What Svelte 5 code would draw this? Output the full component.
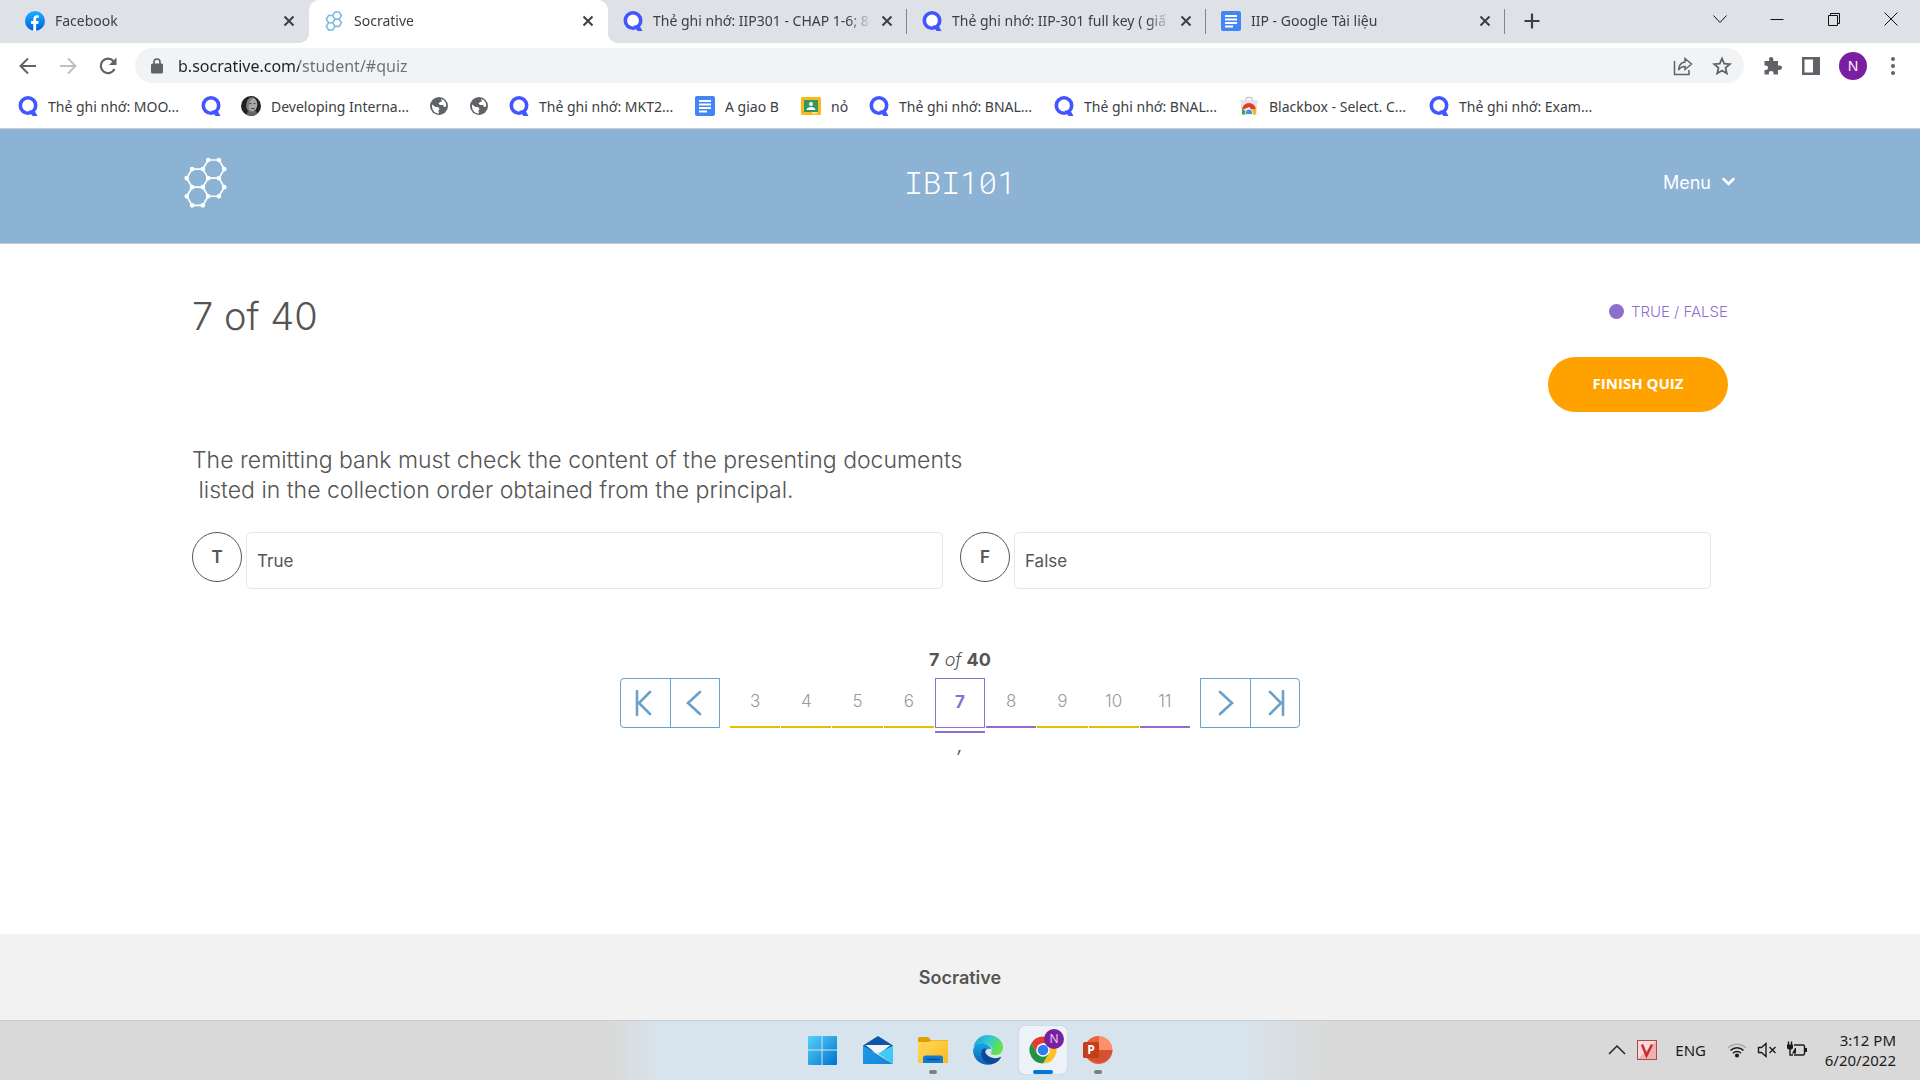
<script>
  const tabs = [
    { icon: 'facebook', title: 'Facebook' },
    { icon: 'socrative', title: 'Socrative', active: true },
    { icon: 'quizlet', title: 'Thẻ ghi nhớ: IIP301 - CHAP 1-6; 8', line: true },
    { icon: 'quizlet', title: 'Thẻ ghi nhớ: IIP-301 full key ( giấ', line: true },
    { icon: 'docs', title: 'IIP - Google Tài liệu', line: true }
  ];
  const bookmarks = [
    { icon: 'quizlet', title: 'Thẻ ghi nhớ: MOO...' },
    { icon: 'quizlet', title: '', name: 'Quizlet' },
    { icon: 'portrait', title: 'Developing Interna...' },
    { icon: 'globe', title: '', name: 'Website' },
    { icon: 'globe', title: '', name: 'Website' },
    { icon: 'quizlet', title: 'Thẻ ghi nhớ: MKT2...' },
    { icon: 'docs', title: 'A giao B' },
    { icon: 'classroom', title: 'nỏ' },
    { icon: 'quizlet', title: 'Thẻ ghi nhớ: BNAL...' },
    { icon: 'quizlet', title: 'Thẻ ghi nhớ: BNAL...' },
    { icon: 'store', title: 'Blackbox - Select. C...' },
    { icon: 'quizlet', title: 'Thẻ ghi nhớ: Exam...' }
  ];
  const answers = [
    { letter: 'T', text: 'True' },
    { letter: 'F', text: 'False' }
  ];
  const pages = [
    { n: 3, kind: 'choice' },
    { n: 4, kind: 'choice' },
    { n: 5, kind: 'choice' },
    { n: 6, kind: 'choice' },
    { n: 7, kind: 'truefalse' },
    { n: 8, kind: 'truefalse' },
    { n: 9, kind: 'choice' },
    { n: 10, kind: 'choice' },
    { n: 11, kind: 'truefalse' }
  ];
  let url = $state('b.socrative.com/student/#quiz');
  let current = $state(7);
</script>

{#snippet hexes()}
  <path d="M145 91H177L193 118L177 145H145L129 118ZM129 118H97L81 145L97 172H129L145 145M177 145L193 172L177 199H145L129 172M97 172L81 199L97 226H129L145 199" />
{/snippet}

{#snippet siteIcon(name)}
  {#if name === 'facebook'}
    <svg class="site" viewBox="0 0 20 20" aria-hidden="true">
      <defs><linearGradient id="fb" x1="0" y1="0" x2="0" y2="1"><stop offset="0" stop-color="#19afff" /><stop offset="1" stop-color="#0062e0" /></linearGradient></defs>
      <circle cx="10" cy="10" r="10" fill="url(#fb)" />
      <path d="M8.3 19.9V13H6V10h2.300V8c0-2.500 1.400-3.800 3.600-3.800.7 0 1.300.1 1.900.2v2.400h-1.200c-1.200 0-1.500.7-1.500 1.500V10h2.600l-.5 3h-2.100v6.900a10 10 0 0 1-2.800 0z" fill="#fff" />
    </svg>
  {:else if name === 'socrative'}
    <svg class="site" viewBox="75 84 126 150" fill="none" stroke="#7cbbe0" stroke-width="12" aria-hidden="true">{@render hexes()}</svg>
  {:else if name === 'quizlet'}
    <svg class="site" viewBox="0 0 20 20" aria-hidden="true">
      <circle cx="10" cy="9.500" r="7.700" fill="#fff" stroke="#4255ff" stroke-width="3.600" />
      <path d="M10.500 14.500h4l3 2L19.500 20h-5z" fill="#4255ff" />
    </svg>
  {:else if name === 'docs'}
    <svg class="site" viewBox="0 0 20 20" aria-hidden="true">
      <rect width="20" height="20" rx="2" fill="#4285f4" />
      <path d="M4 5h12M4 8.500h12M4 12h12M4 15.500h8" stroke="#fff" stroke-width="1.800" />
    </svg>
  {:else if name === 'portrait'}
    <svg class="site" viewBox="0 0 20 20" aria-hidden="true">
      <defs><clipPath id="round"><circle cx="10" cy="10" r="10" /></clipPath></defs>
      <g clip-path="url(#round)">
        <rect width="20" height="20" fill="#222" />
        <path d="M5 20l2-5h8l2 5z" fill="#666" />
        <ellipse cx="11" cy="8.500" rx="5.300" ry="7" fill="#a8a8a8" />
        <path d="M6 6C7 1.500 12 1 13 2L9 5l-1.500 7 2 4-3-2c-2-2-1.500-5-.5-8z" fill="#7c7c7c" />
        <path d="M8.500 7.500h2M12.500 7.500h2M10 12.500h3.500" stroke="#444" />
      </g>
    </svg>
  {:else if name === 'globe'}
    <svg class="site" viewBox="0 0 20 20" aria-hidden="true">
      <circle cx="10" cy="10" r="9" fill="#5f6368" />
      <path d="M3 8.500l3.500 2.500 2.500 0 1.500 2-1 2 .5 2.500C6 18 2.500 14 3 8.500zM12 3c4 1 5.500 4 5.200 7.500L15 11l-1-2h-3L9.500 7.500 11 6l2-.5z" fill="#fff" />
    </svg>
  {:else if name === 'classroom'}
    <svg class="site" viewBox="0 0 20 20" aria-hidden="true">
      <rect y="1" width="20" height="18" rx="1.500" fill="#f7bb18" />
      <rect x="3" y="4" width="14" height="12" fill="#359660" />
      <circle cx="10" cy="8" r="2" fill="#fff" />
      <path d="M5.500 14c0-4 9-4 9 0z" fill="#fff" />
      <path d="M11 17h5" stroke="#fff" />
    </svg>
  {:else}
    <svg class="site" viewBox="0 0 20 20" aria-hidden="true">
      <path d="M7 5V2.500q0-1 1-1h4q1 0 1 1V5" fill="none" stroke="#ccc" stroke-width="1.500" />
      <path d="M1.500 4h17l-1 14.500h-15z" fill="#e4e4e4" />
      <path d="M3 14a7 7 0 0 1 14 0l-4 0-3-3z" fill="#e33b2e" />
      <path d="M3 13v5.500h4.500l1.500-2z" fill="#35a853" />
      <path d="M17 13v5.500h-5l-1-3 2-2.500z" fill="#fbbc05" />
      <path d="M6.500 18.500v-2a3.500 3.500 0 0 1 7 0v2z" fill="#4a90e8" stroke="#fff" stroke-width=".8" />
    </svg>
  {/if}
{/snippet}

<div class="screen">
  <div class="tabstrip">
    <div class="tabs" role="tablist">
      {#each tabs as tab}
        <div class="tab" class:active={tab.active} class:line={tab.line}>
          <button class="tab-main" role="tab" aria-selected={!!tab.active}>
            {@render siteIcon(tab.icon)}
            <span class="tab-title">{tab.title}</span>
          </button>
          <button class="tab-close" aria-label="Close tab">
            <svg viewBox="0 0 12 12" width="12" height="12"><path d="M1.500 1.500l9 9M10.500 1.500l-9 9" stroke="#3c4043" stroke-width="2" /></svg>
          </button>
        </div>
      {/each}
      <button class="new-tab" aria-label="New tab">
        <svg viewBox="0 0 16 16" width="16" height="16"><path d="M8 .5v15M.5 8h15" stroke="#3c4043" stroke-width="2.200" /></svg>
      </button>
    </div>
    <div class="window-buttons">
      <button aria-label="Search tabs"><svg viewBox="0 0 14 14"><path d="M.5 3.500l6.500 7 6.500-7" /></svg></button>
      <button aria-label="Minimize"><svg viewBox="0 0 14 14"><path d="M.5 7.500h13" /></svg></button>
      <button aria-label="Restore"><svg viewBox="0 0 14 14"><path d="M1.500 3.500h9v10h-9zM3.500 3V1.500h9v10H11" /></svg></button>
      <button aria-label="Close"><svg viewBox="0 0 14 14"><path d="M.5 .5l13 13M13.500 .5l-13 13" /></svg></button>
    </div>
  </div>

  <div class="toolbar">
    <div class="nav-buttons">
      <button aria-label="Back"><svg viewBox="0 0 20 20"><path d="M18 10H3M10 2.500L2.500 10l7.500 7.500" fill="none" stroke="#5f6368" stroke-width="2" /></svg></button>
      <button aria-label="Forward"><svg viewBox="0 0 20 20"><path d="M2 10h15M10 2.500l7.500 7.500-7.500 7.500" fill="none" stroke="#bdc0c3" stroke-width="2" /></svg></button>
      <button aria-label="Reload"><svg viewBox="0 0 20 20"><path d="M16.500 13A7.200 7.200 0 1 1 15.500 5.200" fill="none" stroke="#5f6368" stroke-width="2.200" /><path d="M18.500 1.500V9H11z" fill="#5f6368" /></svg></button>
    </div>
    <div class="omnibox">
      <svg class="lock" viewBox="0 0 12 16" aria-hidden="true"><rect y="5.500" width="12" height="10" rx="1.500" fill="#5f6368" /><path d="M3 6V4a3 3 0 0 1 6 0v2" fill="none" stroke="#5f6368" stroke-width="1.600" /></svg>
      <input aria-label="Address" bind:value={url} />
      <button aria-label="Share"><svg viewBox="0 0 20 20" fill="none" stroke="#5f6368" stroke-width="1.500"><path d="M1.500 5v13.500H16V14" /><path d="M12 2.500l6.500 5.500-6.500 5.500V10.500c-3 0-5 1-6.500 3.500.3-4.500 2.500-7.500 6.500-8z" /></svg></button>
      <button aria-label="Bookmark this tab"><svg viewBox="0 0 20 20" fill="none" stroke="#5f6368" stroke-width="1.800"><path d="M10 2.500l2.200 5.200 5.600.5-4.300 3.700 1.300 5.500L10 14.500l-4.800 2.900 1.300-5.500-4.300-3.700 5.600-.5z" /></svg></button>
    </div>
    <div class="tool-buttons">
      <button aria-label="Extensions"><svg viewBox="0 0 20 20"><path d="M1.500 5h4.800C5.500 2.500 6.500 1 8.200 1s2.700 1.500 2 4h4.800v4.800c2.400-.6 4 .3 4 2s-1.600 2.700-4 2V18.500h-4.500c.4-2.400-.6-3.500-2.300-3.500s-2.700 1.100-2.200 3.500H1.500V14c2.400.4 3.500-.6 3.500-2.200s-1.100-2.600-3.500-2.200z" fill="#5f6368" /></svg></button>
      <button aria-label="Side panel"><svg viewBox="0 0 20 20"><path d="M1 1h18v18H1zM3.500 3.500v13H12v-13z" fill="#5f6368" fill-rule="evenodd" /></svg></button>
      <button class="avatar" aria-label="Profile N">N</button>
      <button aria-label="Browser menu"><svg viewBox="0 0 20 20" fill="#5f6368"><circle cx="10" cy="3" r="2" /><circle cx="10" cy="10" r="2" /><circle cx="10" cy="17" r="2" /></svg></button>
    </div>
  </div>

  <nav class="bookmarks" aria-label="Bookmarks">
    {#each bookmarks as mark}
      <a href="#bookmark" aria-label={mark.name}>
        {@render siteIcon(mark.icon)}
        {#if mark.title}<span>{mark.title}</span>{/if}
      </a>
    {/each}
  </nav>

  <header class="site-header">
    <a class="logo" href="#home" aria-label="Socrative home">
      <svg viewBox="73 82 128 152" fill="none" stroke="#fff" stroke-width="5">
        {@render hexes()}
        <path class="nodes" d="M145 91h0M177 91h0M193 118h0M177 145h0M145 145h0M129 118h0M97 118h0M81 145h0M97 172h0M129 172h0M193 172h0M177 199h0M145 199h0M81 199h0M97 226h0M129 226h0" />
      </svg>
    </a>
    <div class="room">IBI101</div>
    <button class="menu">Menu <svg viewBox="0 0 14 10" aria-hidden="true"><path d="M2 2l5 5 5-5" fill="none" stroke="#fff" stroke-width="2.500" stroke-linecap="round" /></svg></button>
  </header>

  <main>
    <div class="quiz-top">
      <h1>7 of 40</h1>
      <div class="quiz-side">
        <div class="kind"><i></i>TRUE / FALSE</div>
        <button class="finish">FINISH QUIZ</button>
      </div>
    </div>
    <p class="question">The remitting bank must check the content of the presenting documents<br />&nbsp;listed in the collection order obtained from the principal.</p>
    <div class="answers">
      {#each answers as answer}
        <button class="answer">
          <span class="letter">{answer.letter}</span>
          <span class="answer-text">{answer.text}</span>
        </button>
      {/each}
    </div>
    <div class="count"><b>{current}</b> <em>of</em> <b>40</b></div>
    <nav class="pager" aria-label="Questions">
      <div class="step-group before">
        <button aria-label="First question"><svg viewBox="0 0 26 26"><path d="M5 1v24M18 2L7 13l11 11" /></svg></button>
        <button aria-label="Previous question"><svg viewBox="0 0 26 26"><path d="M18 2L6 13l12 11" /></svg></button>
      </div>
      <div class="pages">
        {#each pages as page}
          <button class="page {page.kind}" class:current={page.n === current} onclick={() => (current = page.n)}>{page.n}</button>
        {/each}
      </div>
      <div class="step-group after">
        <button aria-label="Next question"><svg viewBox="0 0 26 26"><path d="M8 2l12 11L8 24" /></svg></button>
        <button aria-label="Last question"><svg viewBox="0 0 26 26"><path d="M21 1v24M8 2l11 11L8 24" /></svg></button>
      </div>
    </nav>
    <div class="comma"><em>,</em></div>
  </main>

  <footer>Socrative</footer>

  <div class="taskbar">
    <div></div>
    <div class="apps">
      <button aria-label="Start">
        <svg viewBox="0 0 30 30">
          <defs><linearGradient id="win" x1="0" y1="0" x2="1" y2="1"><stop offset="0" stop-color="#56d1fb" /><stop offset="1" stop-color="#0073d0" /></linearGradient></defs>
          <path d="M0 2a1 1 0 0 1 1-1H13.500V14.500H0zM14.500 1H28a1 1 0 0 1 1 1V14.500H14.500zM0 15.500H13.500V30H1a1 1 0 0 1-1-1zM14.500 15.500H29V29a1 1 0 0 1-1 1H14.500z" fill="url(#win)" />
        </svg>
      </button>
      <button aria-label="Mail">
        <svg viewBox="0 0 30 30">
          <defs><linearGradient id="mail" x1="0" y1="0" x2="1" y2="1"><stop offset="0" stop-color="#1c9de6" /><stop offset="1" stop-color="#1586d8" /></linearGradient></defs>
          <path d="M0 10.500L15 1l15 9.500-3 6H3z" fill="#0a59a8" />
          <path d="M2.500 10h25L15 20z" fill="#f5f5f5" />
          <path d="M30 10.500V29L15 18.500z" fill="#3fc9f5" />
          <path d="M0 10.500V29h30z" fill="url(#mail)" />
        </svg>
      </button>
      <button class="running" aria-label="File Explorer">
        <svg viewBox="0 0 30 30">
          <defs><linearGradient id="folder" x1="0" y1="0" x2="1" y2="1"><stop offset="0" stop-color="#ffd95e" /><stop offset="1" stop-color="#fbb91f" /></linearGradient></defs>
          <path d="M0 3.500Q0 2 1.500 2H10l3 3h15.500Q30 5 30 7v4H0z" fill="#e0a000" />
          <path d="M0 7h11l2.500-1.500H30V28H0z" fill="url(#folder)" />
          <path d="M5 28v-5q0-2.500 2.500-2.500h15Q25 20.500 25 23v5z" fill="#0f7cd4" />
          <path d="M8.500 24.500h13" stroke="#064d8c" stroke-width="1.500" />
        </svg>
      </button>
      <button aria-label="Edge">
        <svg viewBox="0 0 30 30">
          <defs>
            <linearGradient id="edgeTop" x1="0" y1="0" x2="1" y2=".4"><stop offset="0" stop-color="#1b96de" /><stop offset=".5" stop-color="#32c6d6" /><stop offset="1" stop-color="#62e346" /></linearGradient>
            <linearGradient id="edgeLow" x1="0" y1="0" x2="0" y2="1"><stop offset="0" stop-color="#1aa4e6" /><stop offset="1" stop-color="#0a5cb8" /></linearGradient>
          </defs>
          <path d="M.5 12C2 4.500 8 0 15 0c9 0 15 6 15 12.500 0 5-3.500 7.500-7.500 7.500-4 0-5.500-1.500-4-3.500C20 14 18 9 11.500 9 6 9 2 11 .5 12z" fill="url(#edgeTop)" />
          <path d="M0 15C1 10 5.500 8 10 8.500c5.500.5 8.500 3.500 8.500 7 0-2.500-6-2.500-6.500 2.500-.4 5 4 11.500 9 10.500C12 32.500 0 27 0 15z" fill="url(#edgeLow)" />
          <path d="M9 15c-2.500 8 3 14.500 10 14 4-.7 7.300-3.300 9-6.500.3-.6-.2-.9-.7-.6C22 24.500 15.500 23 12.500 18c-.8-2-.2-3.500 1-4.500-2 0-3.700 0-4.500 1.500z" fill="#0d4a94" />
        </svg>
      </button>
      <button class="focused" aria-label="Chrome">
        <svg viewBox="0 0 30 30">
          <path d="M3.300 8.250A13.500 13.500 0 0 1 26.700 8.250H15L9.150 18.400z" fill="#e33b2e" />
          <path d="M26.700 8.250A13.500 13.500 0 0 1 15 28.500L20.850 18.400 15 8.250z" fill="#fcc31e" />
          <path d="M3.300 8.250L9.150 18.400H20.850L15 28.500A13.500 13.500 0 0 1 3.300 8.250z" fill="#229342" />
          <circle cx="15" cy="15" r="6.750" fill="#fff" />
          <circle cx="15" cy="15" r="5.300" fill="#2f7cf0" />
        </svg>
        <span class="badge">N</span>
      </button>
      <button class="running" aria-label="PowerPoint">
        <svg viewBox="0 0 30 30">
          <path d="M16 1A14 14 0 1 0 29.500 15H16z" fill="#e8623f" />
          <path d="M16 1A14 14 0 0 1 29.500 15H16z" fill="#ff8f6b" />
          <path d="M29.500 15A14 14 0 0 1 3 20L16 15z" fill="#d35230" />
          <rect x="0" y="7" width="16" height="16" rx="1.500" fill="#c43e1c" />
          <text x="8" y="19" text-anchor="middle" font-family="Open Sans, sans-serif" font-size="12" font-weight="700" fill="#fff">P</text>
        </svg>
      </button>
    </div>
    <div class="tray">
      <button aria-label="Hidden icons"><svg viewBox="0 0 20 20" fill="none" stroke="#222" stroke-width="1.500"><path d="M2 14l8-8 8 8" /></svg></button>
      <button class="unikey" aria-label="Vietnamese keyboard">
        <svg viewBox="0 0 20 20"><rect x=".5" y=".5" width="19" height="19" fill="#f4dada" stroke="#b8474b" /><path d="M1 19L19 1v18z" fill="#e9b3b3" /><path d="M5 4.500L9.500 15.500 15 4.500" fill="none" stroke="#cf2a30" stroke-width="2.500" /></svg>
      </button>
      <button class="lang">ENG</button>
      <button class="status" aria-label="Network, volume, battery">
        <svg viewBox="0 0 20 20" fill="none" stroke="#1b1b1b" stroke-width="1.500"><path d="M1 8a12.500 12.500 0 0 1 18 0" stroke="#aaa" /><path d="M3.500 10.500a9 9 0 0 1 13 0M6 13.200a5.600 5.600 0 0 1 8 0" /><circle cx="10" cy="15.500" r="1.300" fill="#1b1b1b" /></svg>
        <svg viewBox="0 0 20 20" fill="none" stroke="#1b1b1b" stroke-width="1.400"><path d="M1.500 7.500h3L9 3.500v13l-4.500-4h-3zM12.500 7l6 6M18.500 7l-6 6" /></svg>
        <svg viewBox="0 0 20 20" fill="none" stroke="#1b1b1b" stroke-width="1.400"><path d="M7 5h9q1.500 0 1.500 1.500v7Q17.500 15 16 15H7" /><path d="M19 8v4" stroke-width="2" /><path d="M0 4.500h6v3q0 2-3 2t-3-2zM8 8h1v5.500H5z" fill="#1b1b1b" stroke="none" /><path d="M1.500 5V1.500M4.500 5V1.500M3 9v6h3" /></svg>
      </button>
      <button class="clock"><span>3:12 PM</span><span>6/20/2022</span></button>
    </div>
  </div>
</div>

<style>
  :global(body) {
    margin: 0;
    background: #fff;
  }
  .screen {
    min-height: 100vh;
    display: flex;
    flex-direction: column;
    font-family: Inter, 'Liberation Sans', sans-serif;
    color: #555;
  }
  .screen :global(*) {
    box-sizing: border-box;
  }
  button {
    border: 0;
    padding: 0;
    margin: 0;
    background: none;
    font: inherit;
    color: inherit;
    cursor: pointer;
  }
  a {
    color: inherit;
    text-decoration: none;
  }
  svg {
    display: block;
    flex: none;
  }
  .site {
    width: 20px;
    height: 20px;
  }

  .tabstrip,
  .toolbar,
  .bookmarks,
  .taskbar {
    font-family: 'Noto Sans', 'Open Sans', sans-serif;
  }
  .tabstrip {
    display: flex;
    justify-content: space-between;
    height: 43px;
    background: #dee1e6;
  }
  .tabs {
    display: flex;
    flex: 1;
    padding-left: 10px;
  }
  .tab {
    position: relative;
    display: flex;
    align-items: center;
    flex: 0 1 299px;
    min-width: 0;
    padding: 0 14px 2px 15px;
    font-size: 14px;
    color: #3c4043;
  }
  .tab.active {
    background: #fff;
    border-radius: 10px 10px 0 0;
  }
  .tab.active::before,
  .tab.active::after {
    content: '';
    position: absolute;
    bottom: 0;
    width: 10px;
    height: 10px;
  }
  .tab.active::before {
    left: -10px;
    background: radial-gradient(circle at 0 0, transparent 10px, #fff 10px);
  }
  .tab.active::after {
    right: -10px;
    background: radial-gradient(circle at 100% 0, transparent 10px, #fff 10px);
  }
  .tab.line::after {
    content: '';
    position: absolute;
    right: 0;
    top: 9px;
    width: 1px;
    height: 25px;
    background: #80868b;
  }
  .tab-main {
    display: flex;
    align-items: center;
    gap: 10px;
    flex: 1;
    min-width: 0;
    height: 100%;
    text-align: left;
  }
  .tab-title {
    flex: 1;
    white-space: nowrap;
    mask-image: linear-gradient(to left, transparent, #000 24px);
  }
  .tab-close {
    margin-left: 9px;
  }
  .new-tab {
    padding: 0 20px 2px 19px;
  }
  .window-buttons {
    display: flex;
    height: 37px;
    padding-right: 1px;
  }
  .window-buttons button {
    display: grid;
    place-items: center;
    width: 57px;
  }
  .window-buttons svg {
    width: 14px;
    height: 14px;
    fill: none;
    stroke: #111;
  }

  .toolbar {
    display: flex;
    align-items: center;
    height: 45px;
    gap: 16px;
    padding: 0 17px 0 16px;
  }
  .toolbar svg {
    width: 20px;
    height: 20px;
  }
  .nav-buttons {
    display: flex;
    gap: 20px;
    padding: 0 1px 0 2px;
  }
  .omnibox {
    display: flex;
    align-items: center;
    flex: 1;
    gap: 19px;
    height: 35px;
    padding: 0 12px 0 16px;
    border-radius: 18px;
    background: #f1f3f4;
  }
  .omnibox .lock {
    width: 12px;
    height: 16px;
    margin-right: -4px;
  }
  .omnibox input {
    flex: 1;
    min-width: 0;
    padding: 0;
    border: 0;
    outline: 0;
    font: inherit;
    font-size: 16px;
    color: transparent;
    caret-color: #202124;
    background: linear-gradient(to right, #202124 121px, #6b7075 121px);
    background-clip: text;
  }
  .tool-buttons {
    display: flex;
    align-items: center;
    gap: 18px;
    padding-left: 3px;
  }
  .avatar {
    width: 28px;
    height: 28px;
    border-radius: 50%;
    background: #7b1fa2;
    color: #fff;
    font-size: 14px;
  }
  .avatar + button {
    margin-left: -2px;
  }
  .bookmarks {
    display: grid;
    grid-template-columns: 163px 20px 168px 20px 20px 166px 86px 48px 165px 165px 170px 163px;
    gap: 20px;
    height: 41px;
    padding: 0 18px 4px;
    border-bottom: 1px solid #c9cfd6;
    font-size: 14px;
    color: #3c4043;
  }
  .bookmarks a {
    display: flex;
    align-items: center;
    gap: 10px;
    min-width: 0;
    white-space: nowrap;
  }

  .site-header {
    display: grid;
    grid-template-columns: 1fr auto 1fr;
    align-items: center;
    height: 115px;
    padding: 0 184px;
    border-bottom: 1px solid #c4cbd2;
    background: #8cb2d4;
    color: #fff;
  }
  .logo {
    justify-self: start;
    padding-bottom: 7px;
  }
  .logo svg {
    width: 43px;
    height: 51px;
  }
  .nodes {
    stroke-width: 14px;
    stroke-linecap: round;
  }
  .room {
    padding-bottom: 8px;
    font-family: 'Roboto Mono', 'Liberation Mono', monospace;
    font-size: 31px;
    font-weight: 300;
  }
  .menu {
    display: flex;
    align-items: center;
    justify-self: end;
    gap: 10px;
    padding-bottom: 8px;
    font-size: 18px;
  }
  .menu svg {
    width: 15px;
    height: 10px;
  }

  main {
    flex: 1;
    padding: 48px 192px 0;
  }
  .quiz-top {
    display: flex;
    justify-content: space-between;
  }
  h1 {
    margin: 0;
    font-size: 38px;
    line-height: 48px;
    font-weight: 300;
  }
  .quiz-side {
    display: flex;
    flex-direction: column;
    align-items: flex-end;
    gap: 34px;
    padding-top: 8px;
  }
  .kind {
    display: flex;
    align-items: center;
    gap: 7px;
    font-size: 15px;
    line-height: 23px;
    font-weight: 300;
    color: #8e6fce;
  }
  .kind i {
    width: 15px;
    height: 15px;
    border-radius: 50%;
    background: #8e6fce;
  }
  .finish {
    width: 180px;
    height: 55px;
    padding-bottom: 3px;
    border-radius: 28px;
    background: #ffa200;
    color: #fff;
    font-family: 'Open Sans', sans-serif;
    font-size: 15px;
    font-weight: 700;
  }
  .question {
    margin: 33px 0 27px;
    font-size: 23px;
    line-height: 30px;
    font-weight: 300;
  }
  .answers {
    display: grid;
    grid-template-columns: 1fr 1fr;
  }
  .answer {
    display: flex;
    gap: 4px;
    padding-right: 17px;
    text-align: left;
    font-size: 17px;
  }
  .letter {
    display: grid;
    place-items: center;
    flex: none;
    width: 50px;
    height: 50px;
    border: 1px solid #555;
    border-radius: 50%;
    font-weight: 600;
  }
  .answer-text {
    flex: 1;
    height: 57px;
    padding: 0 10px;
    border: 1px solid #dbe9f3;
    border-radius: 5px;
    line-height: 57px;
    font-weight: 400;
  }
  .count {
    margin-top: 60px;
    text-align: center;
    font-size: 18px;
    line-height: 22px;
  }
  .count em {
    font-weight: 300;
  }
  .count b {
    font-weight: 700;
  }
  .pager {
    display: flex;
    justify-content: center;
    gap: 10px;
    margin-top: 7px;
  }
  .step-group {
    display: flex;
    width: 100px;
    height: 50px;
    border: 1px solid #6ba0c8;
  }
  .before {
    border-radius: 4px 0 0 4px;
  }
  .after {
    border-radius: 0 4px 4px 0;
  }
  .step-group button {
    display: grid;
    place-items: center;
    flex: 1;
  }
  .step-group button + button {
    border-left: 1px solid #6ba0c8;
  }
  .step-group svg {
    width: 26px;
    height: 26px;
    fill: none;
    stroke: #6ba0c8;
    stroke-width: 2.6px;
    stroke-linecap: round;
  }
  .pages {
    display: grid;
    grid-template-columns: repeat(9, 1fr);
    gap: 1px;
    width: 460px;
  }
  .page {
    position: relative;
    height: 50px;
    padding-bottom: 2px;
    border-bottom: 2px solid #e3c000;
    font-size: 17px;
    font-weight: 300;
    color: #999;
  }
  .page.truefalse {
    border-bottom-color: #8e6fce;
  }
  .page.current {
    border: 1px solid #8e6fce;
    color: #8e6fce;
    font-weight: 700;
  }
  .page.current::after {
    content: '';
    position: absolute;
    left: -1px;
    right: -1px;
    bottom: -6px;
    height: 2px;
    background: #8e6fce;
  }
  .comma {
    margin-top: 7px;
    text-align: center;
    font-size: 18px;
    line-height: 22px;
  }
  footer {
    height: 86px;
    background: #f2f2f2;
    text-align: center;
    font-size: 18px;
    line-height: 87px;
    font-weight: 600;
  }

  .taskbar {
    display: grid;
    grid-template-columns: 1fr auto 1fr;
    height: 60px;
    padding-bottom: 1px;
    border-top: 1px solid #c8cdd1;
    background: linear-gradient(to right, #d9d9d9 calc(50% - 350px), #d8e4ed calc(50% - 300px), #d8e4ed calc(50% + 280px), #d9d9d9 calc(50% + 370px));
    color: #1b1b1b;
  }
  .apps {
    display: flex;
  }
  .apps button {
    position: relative;
    display: grid;
    place-items: center;
    width: 55px;
  }
  .apps svg {
    width: 30px;
    height: 30px;
  }
  .apps .focused::before {
    content: '';
    position: absolute;
    inset: 5px 3px 5px 4px;
    border-radius: 5px;
    background: #edf2f9;
    box-shadow: 0 0 1px #8a99a8;
  }
  .focused svg {
    position: relative;
  }
  .running::after,
  .focused::after {
    content: '';
    position: absolute;
    bottom: 5px;
    width: 8px;
    height: 4px;
    border-radius: 2px;
    background: #7c8083;
  }
  .focused::after {
    width: 20px;
    background: #0078d7;
  }
  .badge {
    position: absolute;
    top: 8px;
    right: 6px;
    width: 20px;
    height: 20px;
    border-radius: 50%;
    background: #7b1fa2;
    color: #e6c8f2;
    font-size: 12px;
    line-height: 20px;
  }
  .tray {
    display: flex;
    align-items: center;
    justify-content: flex-end;
    padding: 0 24px 1px 0;
    font-size: 15px;
  }
  .tray svg {
    width: 20px;
    height: 20px;
  }
  .unikey {
    margin: 0 18px 0 10px;
  }
  .status {
    display: flex;
    gap: 10px;
    margin: 0 21px 0 21px;
  }
  .clock {
    display: flex;
    flex-direction: column;
    align-items: flex-end;
    width: 68px;
    line-height: 20px;
  }
</style>
